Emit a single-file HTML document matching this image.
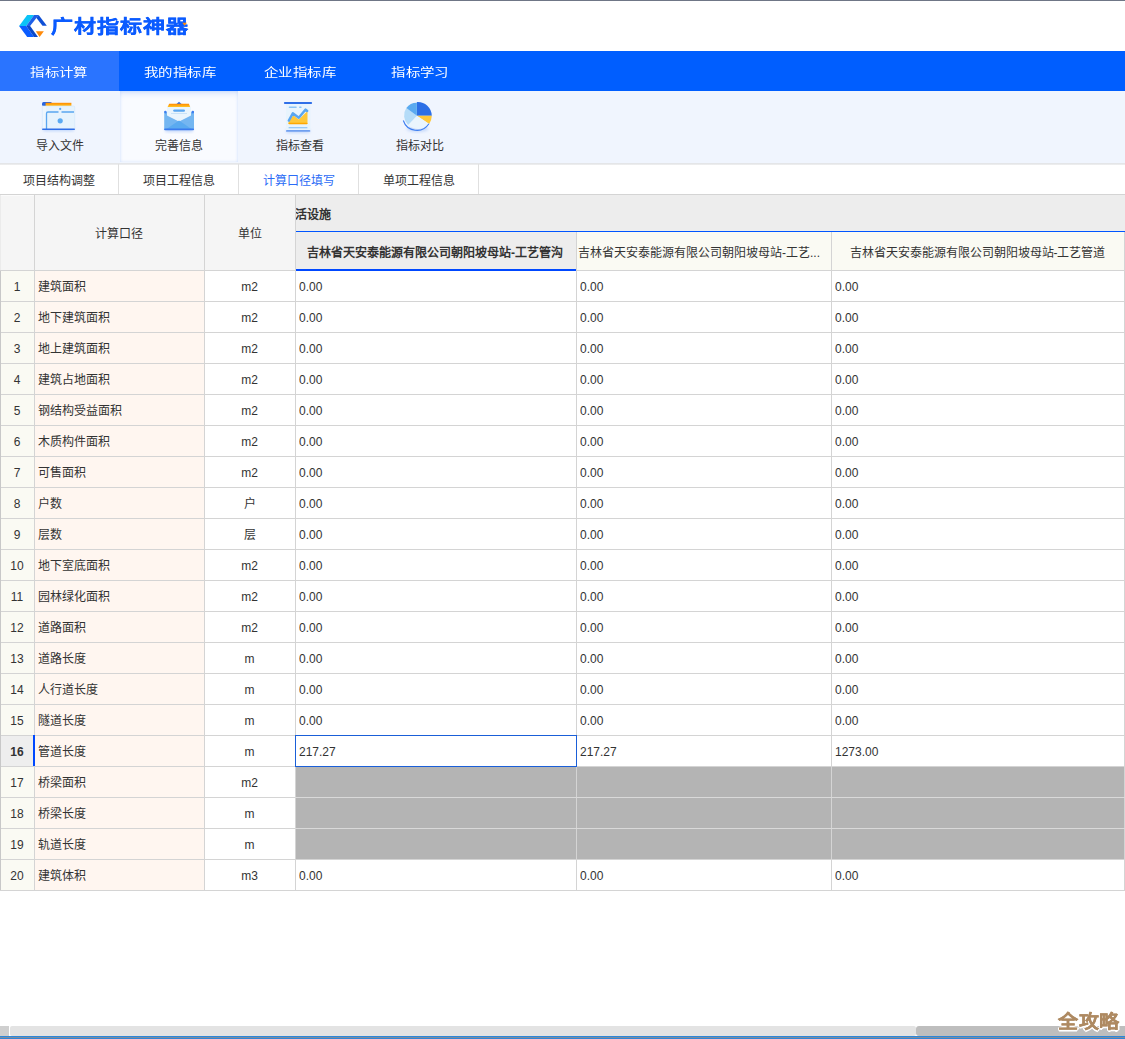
<!DOCTYPE html>
<html lang="zh-CN">
<head>
<meta charset="utf-8">
<style>
*{box-sizing:border-box;margin:0;padding:0}
html,body{width:1125px;height:1039px;overflow:hidden;background:#fff}
body{position:relative;font-family:"Liberation Sans",sans-serif;color:#333;font-size:12px}
.a{position:absolute}
#topline{left:0;top:0;width:1125px;height:1px;background:#6f7686}
#nav{left:0;top:51px;width:1125px;height:40px;background:#005eff}
.nt{position:absolute;top:0;padding-top:2px;height:40px;width:120px;line-height:40px;text-align:center;color:#fff;font-size:14px}
#tool{left:0;top:91px;width:1125px;height:72px;background:#f0f5fe}
.ns{display:inline-block;transform:scale(1.03,0.86);margin-left:-1px}
.ti{position:absolute;top:0;width:120px;height:72px;text-align:center}
.ti span{position:absolute;left:0;width:120px;top:47px;font-size:12px;line-height:16px;color:#333}
#tline{left:0;top:163px;width:1125px;height:2px;background:linear-gradient(#e0e2e5,#f0f0f0)}
#sub{left:0;top:164px;width:1125px;height:30px}
.st{position:absolute;top:0;height:30px;width:120px;line-height:30px;padding-top:2px;text-align:center;font-size:12px;color:#333;border-right:1px solid #e0e0e0}
.hl{position:absolute;background:#d4d4d4;height:1px}
.vl{position:absolute;background:#d4d4d4;width:1px}
.c{position:absolute;height:30px;line-height:30px;font-size:12px;white-space:nowrap;overflow:hidden}
</style>
</head>
<body>
<div id="topline" class="a"></div>
<!-- logo -->
<svg class="a" style="left:0;top:0" width="200" height="51" viewBox="0 0 200 51">
  <polygon points="27.2,15 34.1,15 26.3,26 19.1,26" fill="#0bc3f7"/>
  <polygon points="34.1,15 38.7,15 30.1,26 26.3,26" fill="#1d5fe8"/>
  <polygon points="38.7,15 46.8,25.7 42.5,25.7 36.3,17.8" fill="#0f4fd6"/>
  <polygon points="19.1,26 26.3,26 34,37 27.2,37" fill="#0a5cff"/>
  <polygon points="26.3,26 30.1,26 38,37 34,37" fill="#0b49c9"/>
  <polygon points="35.8,31.2 43.9,31.2 39.6,37" fill="#ff8a0a"/>
</svg>
<svg class="a" style="left:180px;top:20px;z-index:2" width="10" height="8" viewBox="180 20 10 8"><polygon points="182.3,22.8 187,22.8 184.6,25.8" fill="#ff8a0a"/></svg>
<div class="a" style="left:50.5px;top:10px;font-size:22px;line-height:30px;font-weight:900;color:#0b5bff;letter-spacing:1.05px;-webkit-text-stroke:0.4px #0b5bff;transform-origin:0 100%;transform:scale(1,0.85)">广材指标神器</div>

<div id="nav" class="a">
  <div class="nt" style="left:0;width:119px;background:#2a74ff"><span class="ns">指标计算</span></div>
  <div class="nt" style="left:120px"><span class="ns">我的指标库</span></div>
  <div class="nt" style="left:240px"><span class="ns">企业指标库</span></div>
  <div class="nt" style="left:360px"><span class="ns">指标学习</span></div>
</div>

<div id="tool" class="a">
  <div class="ti" style="left:0"><span>导入文件</span></div>
  <div class="ti" style="left:120px;width:118px;height:71px;background:#f9fbff;box-shadow:inset 0 5px 6px -3px rgba(40,110,240,0.18),inset 0 0 3px rgba(40,110,240,0.16)"><span style="width:118px">完善信息</span></div>
  <div class="ti" style="left:240px"><span>指标查看</span></div>
  <div class="ti" style="left:360px"><span>指标对比</span></div>
</div>
<svg class="a" style="left:0;top:91px" width="480" height="72" viewBox="0 91 480 72">
  <defs>
    <filter id="sh" x="-30%" y="-30%" width="160%" height="160%"><feGaussianBlur stdDeviation="1.6"/></filter>
    <linearGradient id="og" x1="0" y1="0" x2="0" y2="1"><stop offset="0" stop-color="#ff8a00"/><stop offset="1" stop-color="#ffc526"/></linearGradient>
  </defs>
  <!-- icon1 folder -->
  <rect x="43" y="126" width="31" height="5" rx="2" fill="#bcd3fa" filter="url(#sh)"/>
  <rect x="42" y="102" width="10" height="4" rx="1.5" fill="#2a66e0"/>
  <rect x="45.6" y="102.8" width="25.8" height="3.4" fill="url(#og)"/>
  <rect x="42" y="106" width="33" height="24" rx="1" fill="#e6f3fd"/>
  <rect x="42" y="106" width="4" height="23" fill="#eef6fd"/>
  <rect x="42.3" y="106" width="32.4" height="23.5" rx="1" fill="none" stroke="#d3e5fb" stroke-width="0.6"/>
  <path d="M46.5 129 V113.5 Q46.5 112 48 112 H58.5 M61.5 112 H74" stroke="#5aa6f0" stroke-width="1.3" fill="none"/>
  <rect x="42" y="128.4" width="33" height="1.7" rx="0.8" fill="#2f6fe8"/>
  <circle cx="60.2" cy="108.9" r="1.1" fill="#5aa6f0"/>
  <circle cx="60.2" cy="120.8" r="2.6" fill="#5aaaf2"/>
  <!-- icon2 envelope -->
  <rect x="165" y="127" width="28" height="5" rx="2" fill="#c5d8fa" filter="url(#sh)"/>
  <path d="M176.5 104 L179 101.8 L181.5 104 Z" fill="#2f6fe8"/>
  <path d="M169.2 103.8 H188.9 L190.2 107 H167.6 Z" fill="url(#og)"/>
  <path d="M167 107 H191 V116 L179 121 L167 116 Z" fill="#eaf5fd"/>
  <rect x="173.2" y="109.4" width="11.8" height="2.4" rx="1.2" fill="#5aa6f0"/>
  <rect x="171" y="113" width="16" height="1" fill="#c9e3f8"/>
  <path d="M164.2 112 Q164.2 111 165.5 111 L167 112.5 V115.5 L179 121.5 L191 115.5 V112.5 L192.5 111 Q194 111 194 112 V130 H164.2 Z" fill="#74b6f1"/>
  <path d="M165 130 L179 120.5 L193 130 Z" fill="#5aaaf0"/>
  <rect x="164.2" y="110.8" width="2.4" height="2.6" rx="1.1" fill="#3d7ef0"/>
  <rect x="191.6" y="110.8" width="2.4" height="2.6" rx="1.1" fill="#3d7ef0"/>
  <rect x="164.2" y="128.4" width="29.8" height="1.8" rx="0.8" fill="#3a7bee"/>
  <!-- icon3 chart -->
  <rect x="286" y="129" width="24" height="4" rx="2" fill="#c5d8fa" filter="url(#sh)"/>
  <rect x="286" y="104" width="24.5" height="26" fill="#e8f4fd"/>
  <rect x="283.9" y="101.9" width="28.2" height="2.2" rx="1" fill="#2f6fe8"/>
  <rect x="288.7" y="106.5" width="8.1" height="1.6" rx="0.8" fill="#8cc4f5"/>
  <rect x="299" y="106.5" width="2.7" height="1.6" rx="0.8" fill="#8cc4f5"/>
  <path d="M288.5 122 L293.3 115.2 L298.8 119.6 L307.5 111 V124 H288.5 Z" fill="#ffc83a"/>
  <rect x="288.5" y="122.8" width="19" height="1.4" rx="0.7" fill="#ffa800"/>
  <path d="M288.8 120.6 L292.8 113.3 L298.8 117.8 L305.6 109.6 L307.2 111" stroke="#5aa6f0" stroke-width="2.4" fill="none" stroke-linejoin="round" stroke-linecap="round"/>
  <rect x="288.5" y="127.2" width="19" height="1" rx="0.5" fill="#7cbcf5"/>
  <rect x="286" y="130" width="24.3" height="1.8" rx="0.9" fill="#6f9ff0"/>
  <!-- icon4 pie -->
  <ellipse cx="417.5" cy="129" rx="11" ry="3" fill="#c5d8fa" filter="url(#sh)"/>
  <path d="M416.9 115.8 L416.9 102 A14 14 0 0 1 431.8 115.8 Z" fill="#2c6fe6"/>
  <path d="M416.9 115.8 L431.8 115.8 A14.6 14.6 0 0 1 429.2 123.9 Z" fill="#ffc83a"/>
  <path d="M416.9 115.8 L429.2 123.9 A14.3 14.3 0 0 1 408.1 124.9 Z" fill="#eaf5fd"/>
  <path d="M416.9 115.8 L408.1 124.9 A13.3 13.3 0 0 1 406.3 108 Z" fill="#b5dcf8"/>
  <path d="M416.9 115.8 L406.3 108 A13 13 0 0 1 416.9 102.8 Z" fill="#5aaaf0"/>
  <path d="M428.9 123.8 A14.3 14.3 0 0 1 403.3 120.5" stroke="#3d7ef0" stroke-width="1.1" fill="none"/>
</svg>
<div id="tline" class="a"></div>
<div id="sub" class="a">
  <div class="st" style="left:0;width:119px">项目结构调整</div>
  <div class="st" style="left:119px">项目工程信息</div>
  <div class="st" style="left:239px;color:#2b6cf6">计算口径填写</div>
  <div class="st" style="left:359px">单项工程信息</div>
</div>

<!-- TABLE -->
<div id="tbl">
<div class="a" style="left:0;top:194px;width:295px;height:76px;background:#f5f5f5"></div>
<div class="a" style="left:295px;top:194px;width:830px;height:37px;background:#ededed"></div>
<div class="a" style="left:296px;top:231px;width:280px;height:39px;background:#ededed"></div>
<div class="a" style="left:577px;top:231px;width:548px;height:39px;background:#fafaf3"></div>
<div class="a" style="left:0;top:270px;width:34px;height:31px;background:#fafaf3"></div>
<div class="a" style="left:34px;top:270px;width:170px;height:31px;background:#fff6f0"></div>
<div class="a" style="left:0;top:301px;width:34px;height:31px;background:#fafaf3"></div>
<div class="a" style="left:34px;top:301px;width:170px;height:31px;background:#fff6f0"></div>
<div class="a" style="left:0;top:332px;width:34px;height:31px;background:#fafaf3"></div>
<div class="a" style="left:34px;top:332px;width:170px;height:31px;background:#fff6f0"></div>
<div class="a" style="left:0;top:363px;width:34px;height:31px;background:#fafaf3"></div>
<div class="a" style="left:34px;top:363px;width:170px;height:31px;background:#fff6f0"></div>
<div class="a" style="left:0;top:394px;width:34px;height:31px;background:#fafaf3"></div>
<div class="a" style="left:34px;top:394px;width:170px;height:31px;background:#fff6f0"></div>
<div class="a" style="left:0;top:425px;width:34px;height:31px;background:#fafaf3"></div>
<div class="a" style="left:34px;top:425px;width:170px;height:31px;background:#fff6f0"></div>
<div class="a" style="left:0;top:456px;width:34px;height:31px;background:#fafaf3"></div>
<div class="a" style="left:34px;top:456px;width:170px;height:31px;background:#fff6f0"></div>
<div class="a" style="left:0;top:487px;width:34px;height:31px;background:#fafaf3"></div>
<div class="a" style="left:34px;top:487px;width:170px;height:31px;background:#fff6f0"></div>
<div class="a" style="left:0;top:518px;width:34px;height:31px;background:#fafaf3"></div>
<div class="a" style="left:34px;top:518px;width:170px;height:31px;background:#fff6f0"></div>
<div class="a" style="left:0;top:549px;width:34px;height:31px;background:#fafaf3"></div>
<div class="a" style="left:34px;top:549px;width:170px;height:31px;background:#fff6f0"></div>
<div class="a" style="left:0;top:580px;width:34px;height:31px;background:#fafaf3"></div>
<div class="a" style="left:34px;top:580px;width:170px;height:31px;background:#fff6f0"></div>
<div class="a" style="left:0;top:611px;width:34px;height:31px;background:#fafaf3"></div>
<div class="a" style="left:34px;top:611px;width:170px;height:31px;background:#fff6f0"></div>
<div class="a" style="left:0;top:642px;width:34px;height:31px;background:#fafaf3"></div>
<div class="a" style="left:34px;top:642px;width:170px;height:31px;background:#fff6f0"></div>
<div class="a" style="left:0;top:673px;width:34px;height:31px;background:#fafaf3"></div>
<div class="a" style="left:34px;top:673px;width:170px;height:31px;background:#fff6f0"></div>
<div class="a" style="left:0;top:704px;width:34px;height:31px;background:#fafaf3"></div>
<div class="a" style="left:34px;top:704px;width:170px;height:31px;background:#fff6f0"></div>
<div class="a" style="left:0;top:735px;width:34px;height:31px;background:#eeeeee"></div>
<div class="a" style="left:34px;top:735px;width:170px;height:31px;background:#fff6f0"></div>
<div class="a" style="left:0;top:766px;width:34px;height:31px;background:#fafaf3"></div>
<div class="a" style="left:34px;top:766px;width:170px;height:31px;background:#fff6f0"></div>
<div class="a" style="left:295px;top:766px;width:830px;height:31px;background:#b4b4b4"></div>
<div class="a" style="left:0;top:797px;width:34px;height:31px;background:#fafaf3"></div>
<div class="a" style="left:34px;top:797px;width:170px;height:31px;background:#fff6f0"></div>
<div class="a" style="left:295px;top:797px;width:830px;height:31px;background:#b4b4b4"></div>
<div class="a" style="left:0;top:828px;width:34px;height:31px;background:#fafaf3"></div>
<div class="a" style="left:34px;top:828px;width:170px;height:31px;background:#fff6f0"></div>
<div class="a" style="left:295px;top:828px;width:830px;height:31px;background:#b4b4b4"></div>
<div class="a" style="left:0;top:859px;width:34px;height:31px;background:#fafaf3"></div>
<div class="a" style="left:34px;top:859px;width:170px;height:31px;background:#fff6f0"></div>
<div class="hl" style="left:0;top:194px;width:1125px"></div>
<div class="hl" style="left:0;top:270px;width:1125px"></div>
<div class="hl" style="left:0;top:301px;width:1125px"></div>
<div class="hl" style="left:0;top:332px;width:1125px"></div>
<div class="hl" style="left:0;top:363px;width:1125px"></div>
<div class="hl" style="left:0;top:394px;width:1125px"></div>
<div class="hl" style="left:0;top:425px;width:1125px"></div>
<div class="hl" style="left:0;top:456px;width:1125px"></div>
<div class="hl" style="left:0;top:487px;width:1125px"></div>
<div class="hl" style="left:0;top:518px;width:1125px"></div>
<div class="hl" style="left:0;top:549px;width:1125px"></div>
<div class="hl" style="left:0;top:580px;width:1125px"></div>
<div class="hl" style="left:0;top:611px;width:1125px"></div>
<div class="hl" style="left:0;top:642px;width:1125px"></div>
<div class="hl" style="left:0;top:673px;width:1125px"></div>
<div class="hl" style="left:0;top:704px;width:1125px"></div>
<div class="hl" style="left:0;top:735px;width:1125px"></div>
<div class="hl" style="left:0;top:766px;width:1125px"></div>
<div class="hl" style="left:0;top:797px;width:1125px"></div>
<div class="hl" style="left:0;top:828px;width:1125px"></div>
<div class="hl" style="left:0;top:859px;width:1125px"></div>
<div class="hl" style="left:0;top:890px;width:1125px"></div>
<div class="vl" style="left:0px;top:194px;height:696px"></div>
<div class="vl" style="left:34px;top:194px;height:696px"></div>
<div class="vl" style="left:204px;top:194px;height:696px"></div>
<div class="vl" style="left:295px;top:194px;height:696px"></div>
<div class="vl" style="left:576px;top:231px;height:659px"></div>
<div class="vl" style="left:831px;top:231px;height:659px"></div>
<div class="vl" style="left:1124px;top:232px;height:659px"></div>
<div class="a" style="left:0;top:195px;width:1px;height:75px;background:#ebebeb"></div>
<div class="a" style="left:1px;top:195px;width:33px;height:1px;background:#fbfbfb"></div>
<div class="a" style="left:0;top:271px;width:1px;height:619px;background:#c8c8c8"></div>
<div class="a" style="left:295px;top:797px;width:830px;height:1px;background:#d9d9d9"></div>
<div class="a" style="left:295px;top:828px;width:830px;height:1px;background:#d9d9d9"></div>
<div class="a" style="left:296px;top:231px;width:829px;height:1px;background:#0055ff"></div>
<div class="a" style="left:296px;top:269px;width:280px;height:2px;background:#0048ff"></div>
<div class="c" style="left:34px;top:219px;width:170px;text-align:center">计算口径</div>
<div class="c" style="left:204px;top:219px;width:91px;text-align:center">单位</div>
<div class="c" style="left:296px;top:200px;width:200px;font-weight:bold"><span style="margin-left:-1.5px">活设施</span></div>
<div class="c" style="left:295px;top:238px;width:280px;text-align:center;font-weight:bold">吉林省天安泰能源有限公司朝阳坡母站-工艺管沟</div>
<div class="c" style="left:577px;top:238px;width:254px;padding-left:1px">吉林省天安泰能源有限公司朝阳坡母站-工艺...</div>
<div class="c" style="left:831px;top:238px;width:293px;text-align:center">吉林省天安泰能源有限公司朝阳坡母站-工艺管道</div>
<div class="c" style="left:0;top:272px;width:34px;text-align:center;">1</div>
<div class="c" style="left:38px;top:272px;width:166px">建筑面积</div>
<div class="c" style="left:204px;top:272px;width:91px;text-align:center">m2</div>
<div class="c" style="left:299px;top:272px;width:276px">0.00</div>
<div class="c" style="left:580px;top:272px;width:250px">0.00</div>
<div class="c" style="left:835px;top:272px;width:289px">0.00</div>
<div class="c" style="left:0;top:303px;width:34px;text-align:center;">2</div>
<div class="c" style="left:38px;top:303px;width:166px">地下建筑面积</div>
<div class="c" style="left:204px;top:303px;width:91px;text-align:center">m2</div>
<div class="c" style="left:299px;top:303px;width:276px">0.00</div>
<div class="c" style="left:580px;top:303px;width:250px">0.00</div>
<div class="c" style="left:835px;top:303px;width:289px">0.00</div>
<div class="c" style="left:0;top:334px;width:34px;text-align:center;">3</div>
<div class="c" style="left:38px;top:334px;width:166px">地上建筑面积</div>
<div class="c" style="left:204px;top:334px;width:91px;text-align:center">m2</div>
<div class="c" style="left:299px;top:334px;width:276px">0.00</div>
<div class="c" style="left:580px;top:334px;width:250px">0.00</div>
<div class="c" style="left:835px;top:334px;width:289px">0.00</div>
<div class="c" style="left:0;top:365px;width:34px;text-align:center;">4</div>
<div class="c" style="left:38px;top:365px;width:166px">建筑占地面积</div>
<div class="c" style="left:204px;top:365px;width:91px;text-align:center">m2</div>
<div class="c" style="left:299px;top:365px;width:276px">0.00</div>
<div class="c" style="left:580px;top:365px;width:250px">0.00</div>
<div class="c" style="left:835px;top:365px;width:289px">0.00</div>
<div class="c" style="left:0;top:396px;width:34px;text-align:center;">5</div>
<div class="c" style="left:38px;top:396px;width:166px">钢结构受益面积</div>
<div class="c" style="left:204px;top:396px;width:91px;text-align:center">m2</div>
<div class="c" style="left:299px;top:396px;width:276px">0.00</div>
<div class="c" style="left:580px;top:396px;width:250px">0.00</div>
<div class="c" style="left:835px;top:396px;width:289px">0.00</div>
<div class="c" style="left:0;top:427px;width:34px;text-align:center;">6</div>
<div class="c" style="left:38px;top:427px;width:166px">木质构件面积</div>
<div class="c" style="left:204px;top:427px;width:91px;text-align:center">m2</div>
<div class="c" style="left:299px;top:427px;width:276px">0.00</div>
<div class="c" style="left:580px;top:427px;width:250px">0.00</div>
<div class="c" style="left:835px;top:427px;width:289px">0.00</div>
<div class="c" style="left:0;top:458px;width:34px;text-align:center;">7</div>
<div class="c" style="left:38px;top:458px;width:166px">可售面积</div>
<div class="c" style="left:204px;top:458px;width:91px;text-align:center">m2</div>
<div class="c" style="left:299px;top:458px;width:276px">0.00</div>
<div class="c" style="left:580px;top:458px;width:250px">0.00</div>
<div class="c" style="left:835px;top:458px;width:289px">0.00</div>
<div class="c" style="left:0;top:489px;width:34px;text-align:center;">8</div>
<div class="c" style="left:38px;top:489px;width:166px">户数</div>
<div class="c" style="left:204px;top:489px;width:91px;text-align:center">户</div>
<div class="c" style="left:299px;top:489px;width:276px">0.00</div>
<div class="c" style="left:580px;top:489px;width:250px">0.00</div>
<div class="c" style="left:835px;top:489px;width:289px">0.00</div>
<div class="c" style="left:0;top:520px;width:34px;text-align:center;">9</div>
<div class="c" style="left:38px;top:520px;width:166px">层数</div>
<div class="c" style="left:204px;top:520px;width:91px;text-align:center">层</div>
<div class="c" style="left:299px;top:520px;width:276px">0.00</div>
<div class="c" style="left:580px;top:520px;width:250px">0.00</div>
<div class="c" style="left:835px;top:520px;width:289px">0.00</div>
<div class="c" style="left:0;top:551px;width:34px;text-align:center;">10</div>
<div class="c" style="left:38px;top:551px;width:166px">地下室底面积</div>
<div class="c" style="left:204px;top:551px;width:91px;text-align:center">m2</div>
<div class="c" style="left:299px;top:551px;width:276px">0.00</div>
<div class="c" style="left:580px;top:551px;width:250px">0.00</div>
<div class="c" style="left:835px;top:551px;width:289px">0.00</div>
<div class="c" style="left:0;top:582px;width:34px;text-align:center;">11</div>
<div class="c" style="left:38px;top:582px;width:166px">园林绿化面积</div>
<div class="c" style="left:204px;top:582px;width:91px;text-align:center">m2</div>
<div class="c" style="left:299px;top:582px;width:276px">0.00</div>
<div class="c" style="left:580px;top:582px;width:250px">0.00</div>
<div class="c" style="left:835px;top:582px;width:289px">0.00</div>
<div class="c" style="left:0;top:613px;width:34px;text-align:center;">12</div>
<div class="c" style="left:38px;top:613px;width:166px">道路面积</div>
<div class="c" style="left:204px;top:613px;width:91px;text-align:center">m2</div>
<div class="c" style="left:299px;top:613px;width:276px">0.00</div>
<div class="c" style="left:580px;top:613px;width:250px">0.00</div>
<div class="c" style="left:835px;top:613px;width:289px">0.00</div>
<div class="c" style="left:0;top:644px;width:34px;text-align:center;">13</div>
<div class="c" style="left:38px;top:644px;width:166px">道路长度</div>
<div class="c" style="left:204px;top:644px;width:91px;text-align:center">m</div>
<div class="c" style="left:299px;top:644px;width:276px">0.00</div>
<div class="c" style="left:580px;top:644px;width:250px">0.00</div>
<div class="c" style="left:835px;top:644px;width:289px">0.00</div>
<div class="c" style="left:0;top:675px;width:34px;text-align:center;">14</div>
<div class="c" style="left:38px;top:675px;width:166px">人行道长度</div>
<div class="c" style="left:204px;top:675px;width:91px;text-align:center">m</div>
<div class="c" style="left:299px;top:675px;width:276px">0.00</div>
<div class="c" style="left:580px;top:675px;width:250px">0.00</div>
<div class="c" style="left:835px;top:675px;width:289px">0.00</div>
<div class="c" style="left:0;top:706px;width:34px;text-align:center;">15</div>
<div class="c" style="left:38px;top:706px;width:166px">隧道长度</div>
<div class="c" style="left:204px;top:706px;width:91px;text-align:center">m</div>
<div class="c" style="left:299px;top:706px;width:276px">0.00</div>
<div class="c" style="left:580px;top:706px;width:250px">0.00</div>
<div class="c" style="left:835px;top:706px;width:289px">0.00</div>
<div class="c" style="left:0;top:737px;width:34px;text-align:center;font-weight:bold;">16</div>
<div class="c" style="left:38px;top:737px;width:166px">管道长度</div>
<div class="c" style="left:204px;top:737px;width:91px;text-align:center">m</div>
<div class="c" style="left:299px;top:737px;width:276px">217.27</div>
<div class="c" style="left:580px;top:737px;width:250px">217.27</div>
<div class="c" style="left:835px;top:737px;width:289px">1273.00</div>
<div class="c" style="left:0;top:768px;width:34px;text-align:center;">17</div>
<div class="c" style="left:38px;top:768px;width:166px">桥梁面积</div>
<div class="c" style="left:204px;top:768px;width:91px;text-align:center">m2</div>
<div class="c" style="left:0;top:799px;width:34px;text-align:center;">18</div>
<div class="c" style="left:38px;top:799px;width:166px">桥梁长度</div>
<div class="c" style="left:204px;top:799px;width:91px;text-align:center">m</div>
<div class="c" style="left:0;top:830px;width:34px;text-align:center;">19</div>
<div class="c" style="left:38px;top:830px;width:166px">轨道长度</div>
<div class="c" style="left:204px;top:830px;width:91px;text-align:center">m</div>
<div class="c" style="left:0;top:861px;width:34px;text-align:center;">20</div>
<div class="c" style="left:38px;top:861px;width:166px">建筑体积</div>
<div class="c" style="left:204px;top:861px;width:91px;text-align:center">m3</div>
<div class="c" style="left:299px;top:861px;width:276px">0.00</div>
<div class="c" style="left:580px;top:861px;width:250px">0.00</div>
<div class="c" style="left:835px;top:861px;width:289px">0.00</div>
<div class="a" style="left:33px;top:735px;width:2px;height:31px;background:#0048ff"></div>
<div class="a" style="left:295px;top:735px;width:282px;height:32px;border:1px solid #1a5fd8"></div>
<div class="a" style="left:0;top:1026px;width:9px;height:10px;background:#cfcfcf"></div>
<div class="a" style="left:10px;top:1026px;width:906px;height:10px;background:#e3e3e3;border-radius:2px"></div>
<div class="a" style="left:916px;top:1026px;width:215px;height:10px;background:#bebebe;border-radius:3px"></div>
<div class="a" style="left:0;top:1036px;width:1125px;height:3px;background:#2e86d8"></div>
<div class="a" style="left:0;top:1037px;width:1125px;height:1px;background:#7f8a99"></div>
<div class="a" style="left:1058px;top:1007px;font-size:20px;line-height:28px;font-weight:900;color:#ae8a62;letter-spacing:0.6px;-webkit-text-stroke:0.35px #ae8a62;transform-origin:0 100%;transform:scaleY(0.93);text-shadow:1.5px 0 #fff,-1.5px 0 #fff,0 1.5px #fff,0 -1.5px #fff,1px 1px #fff,-1px -1px #fff,1px -1px #fff,-1px 1px #fff">全攻略</div>
</div>

</body>
</html>
